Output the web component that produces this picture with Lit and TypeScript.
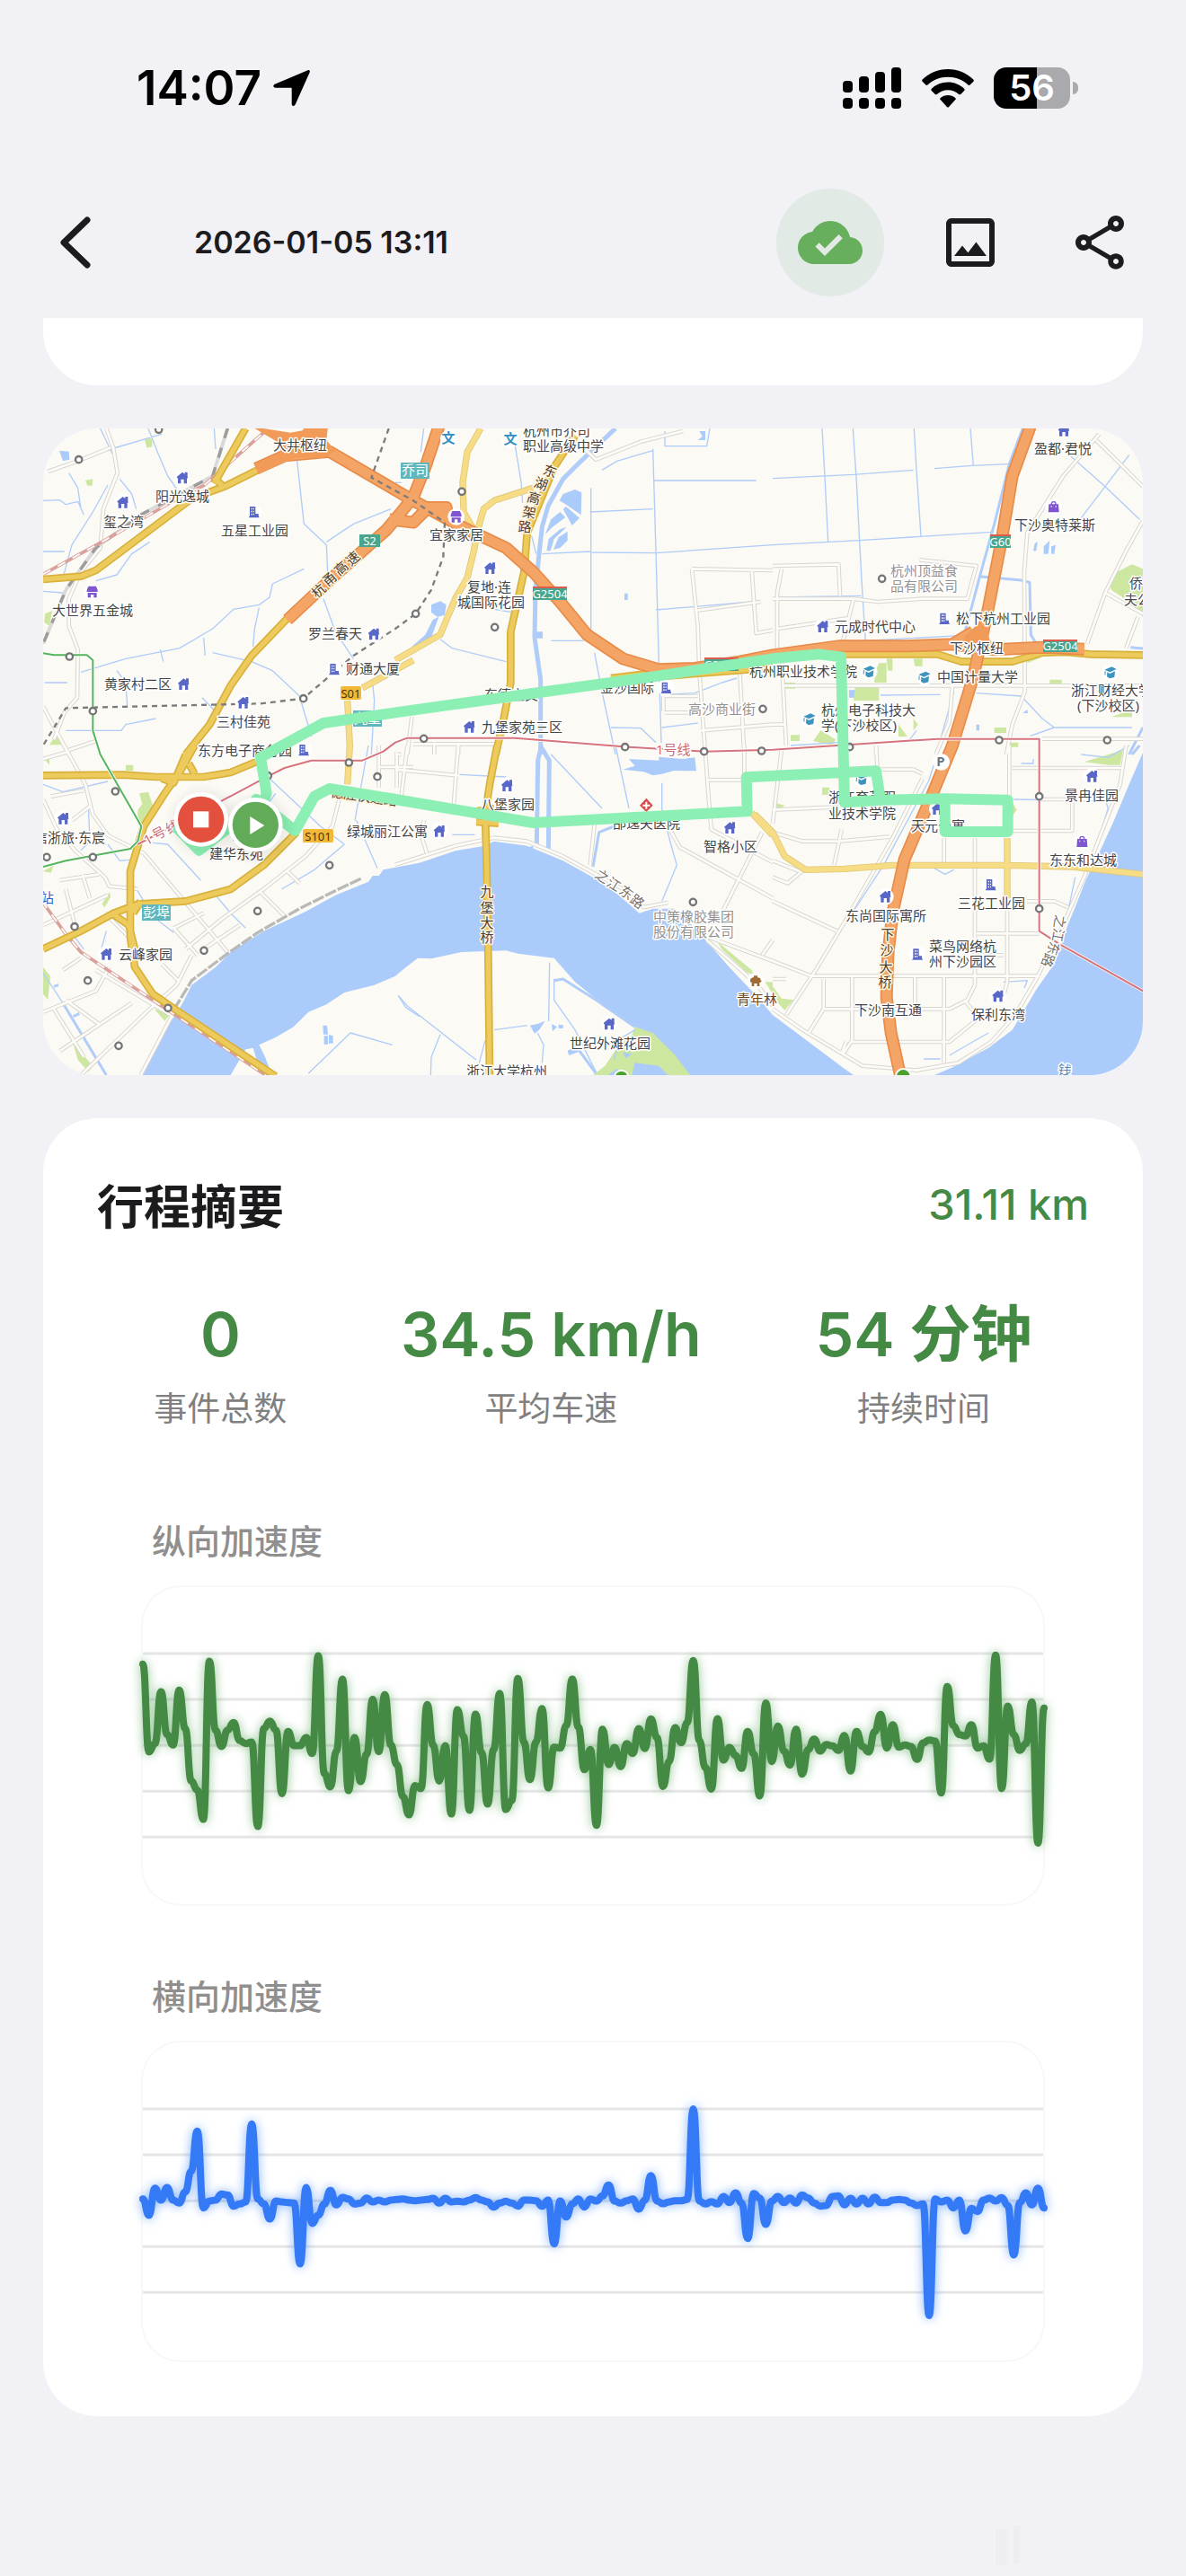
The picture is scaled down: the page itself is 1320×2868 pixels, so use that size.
import { LitElement, html, svg, css } from "lit";
import { customElement, property } from "lit/decorators.js";

/* ---------- Map data ----------
   The map is drawn from six sheets; coordinates inside a sheet are thirds of a map unit. */

type Sheet = "nw" | "n" | "ne" | "sw" | "s" | "se";
type Shape = [Sheet, string];
type Spot = [Sheet, number, number];
type Label = [Sheet, number, number, string, string?];
type Turned = [Sheet, number, number, string, number, string?];
type Badge = [Sheet, number, number, number, number, string, string];

const ORIGIN: Record<Sheet, [number, number]> = {
  nw: [-24, -21],
  n: [1176, -21],
  ne: [2436, -21],
  sw: [-24, 1059],
  s: [1176, 1059],
  se: [2436, 1059],
};

const WATER: Shape[] = [
  ["sw", "M355,1101 L400,1010 455,915 490,860 520,800 600,740 650,690 760,620 900,555 1000,500 1110,455 1125,435 1145,435 1160,415 1280,392 1400,352 1490,337 1530,320 1640,335 1760,385 1860,440 1940,495 2015,560 2060,545 2130,545 2200,610 2250,665 2310,735 2400,830 2460,900 2560,975 2700,1080 2730,1101 2180,1101 2100,1020 2000,940 1900,870 1800,790 1730,710 1610,695 1570,685 1420,690 1320,712 1275,710 1230,745 1200,770 1130,800 1030,825 970,865 910,890 860,940 800,975 745,1000 765,1040 780,1080 740,1060 725,1010 700,1015 650,1101Z"],
  ["se", "M1240,15 L1190,130 1140,250 1085,370 1045,450 1010,540 985,600 940,730 880,815 800,950 720,1010 600,1075 540,1101 1240,1101Z"],
  ["n", "M560,240 L600,225 622,235 620,310 570,275 548,262Z M560,290 L570,282 615,320 590,345Z M500,375 L520,325 550,300 568,318 525,350Z M505,430 L512,390 550,358 572,350 530,390 518,430Z M528,425 L545,385 575,365 575,395 550,420Z"],
  ["s", "M760,80 L800,68 780,45 880,50 880,38 960,45 1000,40 1005,85 930,84 890,95 860,100 830,88Z"],
  ["s", "M450,935 L475,930 500,920 480,950 465,962Z M522,930 L540,940 525,955Z M545,933 L560,933 560,945 545,945Z M575,1020 L610,1000 620,1020 580,1035Z M445,340 L460,335 460,360Z"],
  ["sw", "M958,935 L972,935 975,965 960,965Z M962,970 L975,970 975,998 962,998Z M978,966 L992,970 992,995 978,995Z"],
  ["nw", "M78,95 L110,98 112,125 90,130Z"],
  ["n", "M120,610 L150,598 170,610 165,645 140,650 120,635Z M55,750 L100,710 125,660 145,650 120,720 85,755Z M1015,30 L1035,30 1035,60 1010,60 1025,48Z M470,700 H492 V722 H470Z M765,572 L776,572 776,594 765,594Z"],
  ["ne", "M875,405 L885,400 880,430 870,430Z M905,415 L925,395 920,440 905,440Z M930,415 L945,410 940,440 930,440Z M255,895 H315 V920 H255Z M320,890 H352 V925 H320Z M835,972 L850,960 852,972Z M680,1010 H690 V1030 H680Z"],
];

const GREEN: Shape[] = [
  ["nw", "M362,55 L388,55 388,82 370,86Z M165,195 L190,190 188,212 172,212Z M70,1040 L90,1078 45,1078Z M30,640 L55,630 45,680 28,670Z"],
  ["sw", "M345,160 L375,155 390,200 370,250 340,265 340,215 355,195Z M24,420 L60,400 50,425Z M220,530 L245,490 250,505 230,540Z M24,740 L48,770 40,850 24,830Z M125,1000 L155,1030 190,1070 175,1090 140,1050Z M24,40 L45,40 45,65Z M395,880 L450,895 430,920Z M300,65 H325 V85 H300Z"],
  ["s", "M800,940 L860,960 930,1030 985,1101 660,1101 700,1070 740,1010 790,965Z M1075,655 L1190,750 1200,770 1170,755 1090,680Z M1235,790 L1260,790 1260,830Z"],
  ["se", "M0,805 L30,845 70,850 40,885 0,840Z M1040,55 L1170,15 1160,65 1120,65Z M0,190 L40,200 20,215 0,210Z M165,140 H190 V165 H165Z M800,190 L815,215 800,235Z"],
  ["ne", "M1125,540 L1150,500 1200,475 1236,490 1236,650 1190,600 1130,560Z M275,885 H355 V930 H270Z M355,805 H380 V870 H340 V840Z M380,790 H400 V830 H385Z M470,790 H500 V815 H475Z M60,1045 H90 V1065 H60Z M420,1010 L450,1050 420,1050Z M135,1065 L160,1030 210,1060 200,1080Z M470,990 L485,1010 470,1030Z M925,860 H965 V875 H925Z M740,1020 H780 V1038 H740Z M1130,985 L1200,960 1200,985Z M40,870 H75 V890 H40Z M790,1070 H820 V1085 H790Z M850,790 L900,785 850,805Z"],
];

const CREEK: Shape[] = [
  ["nw", "M215,21 L255,105 M40,160 L250,90 420,40 M375,21 L410,110 440,180 475,230 M24,262 L80,260 100,275 140,265 160,310 M280,190 L320,240 335,290 M240,210 L190,300 120,410 90,520 M24,432 H95 M110,170 L140,220 150,290 M24,565 L90,570 M595,21 L600,90 M870,110 L895,340 970,410 975,520 M960,590 L1000,700 1060,790 M970,400 L1060,340 1185,290 M895,490 L790,540 780,585 745,610 660,625 590,690 480,755 M480,755 L300,790 150,835 M745,620 L730,690 725,750 M560,720 L565,780 M590,770 L720,800 790,830 880,915 920,1050 M415,760 L425,800 M270,830 L300,870 305,950 M30,870 L105,870 M400,990 L300,1010 285,1030 100,1030 M555,920 L650,1020 M1125,880 L1130,930 1120,1110 M380,400 L320,440 270,510 200,530"],
  ["n", "M95,21 L85,100 M400,80 L420,200 425,270 M860,90 L870,430 880,810 888,1070 M690,160 L740,130 860,95 M865,195 H1205 M650,300 L860,290 M653,220 V700 M490,440 L650,432 M650,435 L870,437 1260,410 M870,627 L1190,600 M520,730 H630 M150,725 L190,755 370,800 M665,770 L690,900 735,1110 M455,380 L470,440 M330,625 L390,635 M720,1020 L820,1022 870,1070 M890,1020 L1010,1005 M890,910 L1000,905 1090,870 1140,855 M900,30 V80 H1040 L1050,21 M20,202 H0"],
  ["ne", "M165,21 L175,200 185,400 M268,21 L280,200 290,400 300,580 310,730 M472,21 L480,160 495,380 M0,188 L270,175 470,160 M540,155 L665,145 790,140 M660,21 L670,145 M0,410 L290,395 730,367 M980,100 L1110,215 1225,325 M1190,110 L1110,215 1030,320 M20,585 L295,580 M220,735 L640,712 M60,1080 L220,1070 M360,912 L560,910 M680,905 L830,915 900,990 940,1020 1200,1020 M940,1020 L860,1048 M450,1070 L480,1030 M605,900 L560,1060"],
  ["sw", "M24,130 L90,155 240,120 M175,200 L180,320 150,350 M240,330 L280,385 340,380 M780,110 L950,270 1030,330 M1030,330 L930,415 820,480 M600,500 L650,560 700,610 M390,325 L440,330 550,450 M1110,0 L1065,250 M1070,250 L1140,410 M370,555 L460,625 M330,470 L360,520 M910,1095 L1050,960 1190,1000 M1210,835 L1235,875 1280,905 M24,760 L90,860 M235,620 L215,690 M130,640 L160,680 M745,240 L800,160"],
  ["s", "M10,835 L40,870 270,1050 M150,965 L120,1040 118,1101 M515,725 L512,920 M330,950 L440,935 M475,960 L495,1000 490,1060 M530,780 V850 L600,950 670,1090 M215,97 L370,105 M520,30 L690,210 M735,0 L780,210 M890,125 V210 L920,330 940,400 890,520 M300,985 L280,1060 M190,298 H265 M730,1050 L750,980 800,950"],
  ["se", "M135,770 L160,720 370,400 520,120 560,0 M1110,180 L1120,210 1095,290 M805,180 L1110,185 M540,410 L575,430 605,415 M1010,440 L985,560 M590,1035 L720,960 M505,1047 H560 M770,790 L850,785 840,810 M1030,30 L1120,40 1190,0 M830,60 H870 V45"],
];

const CANAL: Shape[] = [
  ["n", "M735,21 L620,130 560,190 510,280 490,350 480,440 468,560 465,720 485,860 485,1110"],
  ["s", "M488,0 L476,50 472,330 M490,10 L514,50 511,350"],
];

const STREAM: Shape[] = [
  ["ne", "M835,21 L790,140 740,340 690,520 640,710 M690,515 L830,528 858,535 862,710 880,740 M1195,752 L1236,756 M1236,1020 L1190,1110"],
  ["se", "M1225,0 L1200,30"],
  ["s", "M660,405 L680,290 730,270 M530,785 L560,780 670,850 800,940 M600,1000 L670,1095"],
  ["sw", "M90,860 L150,960 235,1101 M60,805 L75,800 M125,905 L145,895 M155,970 L175,960"],
];

const MINOR: Shape[] = [
  ["nw", "M235,21 L258,85 272,170 225,290 215,420 150,500 110,590 110,680 140,760 138,920 95,970 60,1060 M40,165 L140,130 250,85 M24,950 L110,1110 M110,1095 L200,1065"],
  ["n", "M600,60 L670,125 820,65 960,30 M990,490 L1260,495 M990,490 L1010,680 1015,830 M1190,495 L1205,705 1260,695 M1000,630 L1220,600 M900,915 H1010 M900,970 H1010 M895,915 V965 M1150,830 L1165,1110 M1020,1030 L1260,1010 M1015,830 L1035,1110 M40,1110 L55,985 M0,1110 H20 M60,1075 H340 M130,1070 V1110 M210,1070 V1110"],
  ["ne", "M0,480 L220,475 225,580 M15,690 L250,655 M0,590 L270,590 350,600 500,590 650,590 680,480 490,460 M30,490 L15,570 15,760 M270,590 L235,730 M1090,40 L970,180 850,370 840,500 842,900 800,1010 780,1110 M1080,60 L1236,215 M1236,330 L1180,430 1110,570 1050,740 M1110,570 L1236,640 M1220,650 L1180,755 M35,880 H1236 M30,790 L45,1080 M600,880 L590,1000 545,1110 M900,1058 H1236 M0,1010 H40 M345,1080 V1110"],
  ["sw", "M95,0 L165,130 190,230 240,300 360,360 640,690 M24,180 L70,280 130,350 230,440 245,470 340,480 M24,45 L110,20 M50,170 L160,150 M120,250 L185,200 M24,600 L240,500 M80,450 L210,430 M155,430 L180,510 M24,890 L200,820 245,740 M80,1020 L320,860 M100,850 L210,930 M90,750 L150,710 M150,1101 L380,880 470,800 520,700 M200,750 L450,900 M450,910 L350,1101 M100,480 L130,600 M160,1040 L60,880 M1020,150 L990,270 900,370 760,480 620,580 500,680 M840,420 L880,460 M750,490 L830,570 M460,610 L560,560 M460,610 L540,700 M420,730 L480,790 M560,680 L680,600 M1145,0 V140 M1145,72 H1260 M1205,20 V140 M230,560 L320,650"],
  ["s", "M40,0 L20,170 M0,80 L210,100 M210,0 L195,195 M95,250 L90,310 105,360 M0,398 L200,335 330,308 440,320 560,370 760,480 830,540 910,525 M1035,20 L1045,160 1055,280 1260,390 M1045,115 H1170 M1165,0 V100 M900,250 L950,340 1260,510 M1225,290 L1150,440 1090,560 M665,265 L650,400 M1045,640 L1260,720 M1260,650 L1225,700 M1040,650 L1120,720 1210,800 1260,870"],
  ["se", "M30,10 L0,260 M0,215 L220,205 M0,290 L100,320 220,320 390,305 M345,0 L350,80 470,80 500,95 M230,280 L205,400 M110,410 L50,460 0,440 M500,110 L400,310 240,590 150,740 45,900 M0,520 L215,620 M0,385 L90,420 M0,720 L130,770 890,770 M45,780 H0 M170,780 V880 L120,960 M265,775 V985 L235,1030 M475,775 V870 M572,775 V1060 M170,880 H590 L650,850 675,800 675,310 M572,310 V395 M265,990 H590 L700,900 M640,850 L680,900 M783,510 V790 L770,840 M850,520 L940,520 985,540 M800,285 H1000 V180 M680,628 H890 M680,700 H770 M790,0 V180 M800,75 H1170 M890,180 H1110 M0,880 L100,950 300,1070 480,1085 620,1060 730,990 810,900 880,780 960,620 1040,440 1160,130 1180,0 M245,990 L230,1030"],
];

const LIGHT_YELLOW: Shape[] = [
  ["nw", "M1090,888 L1260,795 M1040,930 L1048,1080 1040,1210"],
  ["n", "M0,795 L150,710 200,590 240,520 262,430 275,360 295,290 330,262 460,220 M285,21 L240,100 225,200 228,300 265,365"],
  ["s", "M1190,225 L1260,300"],
  ["se", "M-60,230 L0,290 40,370 110,415 240,412 400,400 780,400 1000,405 1236,430 M783,310 V510"],
];

const YELLOW: Shape[] = [
  ["nw", "M840,655 L720,780 650,880 580,1010 500,1110 M24,525 L150,515 200,495 400,345 520,255 630,215 740,160 M595,205 L700,21 M595,185 L625,215"],
  ["sw", "M530,0 L480,90 430,160 360,270 315,420 315,640 330,740 390,830 470,885 800,1105 M24,100 L290,98 400,105 560,105 650,90 735,55 M24,680 L150,620 260,560 340,530 500,520 650,480 760,400 870,290 M420,110 L460,125 500,30 M510,60 L530,95 M260,565 L310,600 330,680 M350,520 L325,560"],
  ["n", "M600,45 L530,150 440,370 430,500 385,700 385,870 360,1000 335,1110 M720,855 L860,838 M900,848 L1260,820"],
  ["s", "M340,0 L315,130 300,230 305,400 310,700 315,1105 M270,220 L330,210 M270,255 L345,260"],
  ["ne", "M240,775 L550,775 630,800 800,800 900,770 980,768 1060,775 1236,778"],
];

const ORANGE: Shape[] = [
  ["ne", "M860,15 L800,180 765,390 720,620 670,850 600,1080 530,1250 440,1460 400,1640 385,1780 380,1920 395,2040 428,2190"],
  ["n", "M285,380 L370,420 460,500 550,600 640,710 760,790 880,826 1000,822 1150,800 1260,778 1480,748 1710,748 1860,742 2000,760 2160,752 2300,758 M1860,742 L1930,700"],
  ["nw", "M1345,15 L1300,150 1260,250 1220,300 1170,360 1000,510 840,660 M735,155 L830,112 980,98 1120,180 1260,262 1400,338 1485,380 M1180,325 L1260,335 1310,285 1370,285 1375,310"],
];

const LABELS: Label[] = [
  ["nw", 793, 76, "大井枢纽"],
  ["nw", 400, 246, "阳光逸城"],
  ["nw", 226, 330, "玺之湾"],
  ["nw", 617, 360, "五星工业园"],
  ["nw", 55, 627, "大世界五金城"],
  ["nw", 908, 705, "罗兰春天"],
  ["nw", 1035, 823, "财通大厦"],
  ["nw", 229, 874, "黄家村二区"],
  ["nw", 604, 998, "三村佳苑"],
  ["nw", 540, 1094, "东方电子商务园"],
  ["n", 425, 28, "杭州市乔司"],
  ["n", 425, 78, "职业高级中学"],
  ["n", 113, 376, "宜家家居"],
  ["n", 241, 549, "复地·连"],
  ["n", 206, 601, "城国际花园"],
  ["n", 297, 910, "东德立交"],
  ["n", 288, 1018, "九堡家苑三区"],
  ["n", 685, 885, "金沙国际"],
  ["n", 978, 957, "高沙商业街", "soft"],
  ["n", 870, 1092, "1号线", "line"],
  ["ne", 873, 87, "盈都·君悦"],
  ["ne", 806, 342, "下沙奥特莱斯"],
  ["ne", 393, 495, "杭州顶益食", "soft"],
  ["ne", 393, 546, "品有限公司", "soft"],
  ["ne", 208, 682, "元成时代中心"],
  ["ne", 612, 655, "松下杭州工业园"],
  ["ne", 590, 753, "下沙枢纽"],
  ["ne", -77, 830, "杭州职业技术学院"],
  ["ne", 548, 850, "中国计量大学"],
  ["ne", 995, 893, "浙江财经大学"],
  ["ne", 1018, 945, "(下沙校区)"],
  ["ne", 163, 960, "杭州电子科技大"],
  ["ne", 163, 1012, "学(下沙校区)"],
  ["ne", 1192, 537, "侨"],
  ["ne", 1172, 590, "夫公园"],
  ["sw", -6, 305, "信浙旅·东宸"],
  ["sw", 578, 360, "建华东苑"],
  ["sw", 1038, 284, "绿城丽江公寓"],
  ["sw", 276, 697, "云峰家园"],
  ["sw", 16, 508, "站", "blue"],
  ["s", 286, 196, "八堡家园"],
  ["s", 727, 258, "邵逸夫医院"],
  ["s", 1028, 335, "智格小区"],
  ["s", 861, 569, "中策橡胶集团", "soft"],
  ["s", 861, 620, "股份有限公司", "soft"],
  ["s", 1139, 846, "青年林", "brown"],
  ["s", 581, 993, "世纪外滩花园"],
  ["s", 236, 1087, "浙江大学杭州"],
  ["se", 187, 170, "浙江育英职"],
  ["se", 187, 224, "业技术学院"],
  ["se", 462, 267, "天元公寓"],
  ["se", 976, 165, "景冉佳园"],
  ["se", 925, 381, "东东和达城"],
  ["se", 617, 525, "三花工业园"],
  ["se", 242, 566, "东尚国际寓所"],
  ["se", 523, 669, "菜鸟网络杭"],
  ["se", 523, 720, "州下沙园区"],
  ["se", 274, 882, "下沙南互通"],
  ["se", 664, 898, "保利东湾"],
];

const TURNED: Turned[] = [
  ["nw", 944, 563, "杭", -42, "road"],
  ["nw", 981, 524, "甬", -42, "road"],
  ["nw", 1020, 489, "高", -42, "road"],
  ["nw", 1058, 456, "速", -42, "road"],
  ["n", 515, 165, "东", 20, "road"],
  ["n", 487, 208, "湖", 20, "road"],
  ["n", 462, 255, "高", 16, "road"],
  ["n", 447, 302, "架", 10, "road"],
  ["n", 433, 352, "路", 4, "road"],
  ["sw", 1095, 170, "德胜快速路", 8, "road"],
  ["s", 690, 438, "之", 32, "grey"],
  ["s", 730, 465, "江", 32, "grey"],
  ["s", 770, 492, "东", 36, "grey"],
  ["s", 808, 521, "路", 36, "grey"],
  ["s", 305, 490, "九", 0, "road"],
  ["s", 306, 542, "堡", 0, "road"],
  ["s", 306, 593, "大", 0, "road"],
  ["s", 307, 643, "桥", 0, "road"],
  ["se", 383, 633, "下", 0, "road"],
  ["se", 381, 685, "沙", 0, "road"],
  ["se", 378, 740, "大", 0, "road"],
  ["se", 376, 792, "桥", 0, "road"],
  ["se", 958, 587, "之", 98, "grey"],
  ["se", 950, 632, "江", 100, "grey"],
  ["se", 936, 678, "东", 106, "grey"],
  ["se", 918, 718, "路", 110, "grey"],
  ["se", 975, 1085, "钱", 10, "water"],
  ["sw", 375, 315, "1", -28, "line"],
  ["sw", 412, 294, "号", -28, "line"],
  ["sw", 455, 272, "线", -28, "line"],
];

const BADGES: Badge[] = [
  ["nw", 1079, 374, 69, 43, "S2", "express"],
  ["nw", 1018, 882, 68, 44, "S01", "state"],
  ["n", 17, 135, 96, 53, "乔司", "town"],
  ["n", 459, 550, 113, 46, "G2504", "national"],
  ["n", 1032, 785, 114, 46, "G2504", "national"],
  ["ne", 726, 375, 69, 44, "G60", "national"],
  ["ne", 904, 727, 114, 43, "G2504", "national"],
  ["sw", 891, 279, 101, 44, "S101", "state"],
  ["sw", 355, 530, 96, 54, "彭埠", "town"],
  ["nw", 1059, 963, 95, 53, "九堡", "town"],
];

const HOUSES: Spot[] = [
  ["nw", 489, 186], ["nw", 290, 268], ["nw", 1128, 708], ["nw", 493, 875], ["nw", 692, 937],
  ["n", 316, 488], ["n", 247, 1018], ["ne", 972, 28], ["ne", 167, 683], ["sw", 91, 244],
  ["sw", 235, 697], ["s", 373, 134], ["s", 147, 286], ["s", 1117, 275], ["s", 714, 930],
  ["se", 1066, 103], ["se", 376, 505], ["se", 752, 837], ["se", 550, 212], ["sw", 672, 300],
];
const TOWERS: Spot[] = [
  ["nw", 727, 300], ["nw", 995, 825], ["nw", 893, 1095], ["n", 903, 887], ["ne", 572, 656],
  ["se", 727, 465], ["se", 482, 697],
];
const SHOPS: Spot[] = [["nw", 188, 567], ["n", 203, 316]];
const BAGS: Spot[] = [["ne", 938, 283], ["se", 1033, 321]];
const CAPS: Spot[] = [["ne", 322, 833], ["ne", 507, 852], ["ne", 1128, 836], ["ne", 123, 992], ["se", 298, 112]];
const STATIONS: Spot[] = [
  ["nw", 143, 125], ["nw", 410, 25], ["nw", 112, 783], ["nw", 190, 965], ["nw", 893, 923],
  ["n", 222, 232], ["n", 68, 640], ["n", 332, 685], ["n", 95, 1057], ["n", 767, 1085],
  ["n", 1031, 1100], ["n", 1223, 1098], ["n", 1227, 958], ["ne", 365, 523], ["ne", 756, 1062],
  ["ne", 1117, 1062], ["ne", 257, 1085], ["sw", 265, 153], ["sw", 190, 373], ["sw", 36, 373],
  ["sw", 129, 605], ["sw", 173, 785], ["sw", 276, 1003], ["sw", 441, 877], ["sw", 561, 685],
  ["sw", 740, 553], ["sw", 980, 400], ["sw", 1140, 104], ["sw", 1045, 57], ["sw", 775, 101],
  ["s", 994, 523], ["se", 890, 170], ["se", 890, 545],
];

const ROUTE =
  "M475,280 L545,350 660,262 735,262 770,160 750,40 960,-75 1200,-110 2060,-230 2460,-290 2615,-305 2688,-296 " +
  "2700,190 2825,182 3035,178 3245,182 3245,288 3035,288 3035,178 2820,182 2805,85 2372,106 2375,220 1660,258 1200,180 " +
  "980,144 930,170 865,285 735,180";

const toMap = (s: Sheet, x: number, y: number) => [
  Math.round((x + ORIGIN[s][0]) / 3),
  Math.round((y + ORIGIN[s][1]) / 3),
];
const at = (s: Sheet, x = 0, y = 0) => `translate(${x + ORIGIN[s][0]} ${y + ORIGIN[s][1]})`;
const layer = (shapes: Shape[], ...classes: string[]) =>
  classes.map((c) => shapes.map(([s, d]) => svg`<path class=${c} transform=${at(s)} d=${d} />`));

@customElement("trip-map")
export class TripMap extends LitElement {
  static styles = css`
    :host { display: block; border-radius: 60px; overflow: hidden; }
    svg { display: block; width: 100%; height: auto; }
    path { stroke-linejoin: round; }
    .land { fill: #fbfaf5; }
    .water { fill: #abcbfb; }
    .park { fill: #cde7a1; }
    .creek, .stream, .canal { fill: none; stroke: #b0ccf9; }
    .creek { stroke-width: 4; }
    .stream { stroke-width: 9; }
    .canal { stroke-width: 15; }
    .minor-edge { fill: none; stroke: #d9d6d0; stroke-width: 14; }
    .minor { fill: none; stroke: #fdfcf9; stroke-width: 8; }
    .pale-edge { fill: none; stroke: #e0c878; stroke-width: 22; }
    .pale { fill: none; stroke: #f7dc86; stroke-width: 17; }
    .gold-edge { fill: none; stroke: #d9b03a; stroke-width: 26; }
    .gold { fill: none; stroke: #eccb5c; stroke-width: 16; }
    .motor-edge { fill: none; stroke: #e88b48; stroke-width: 42; }
    .motor { fill: none; stroke: #f4a464; stroke-width: 32; }
    .motor-node { fill: #f29a58; }
    .rail-base { fill: none; stroke: #dadada; stroke-width: 12; }
    .rail-grey { fill: none; stroke: #9c9c9c; stroke-width: 10; stroke-dasharray: 34 34; }
    .rail-pink { fill: none; stroke: #d9a09c; stroke-width: 11; }
    .rail-gap { fill: none; stroke: #fdf8f6; stroke-width: 6; stroke-dasharray: 28 28; }
    .works { fill: none; stroke: #7c7c7c; stroke-width: 7; stroke-dasharray: 18 15; }
    .quay { fill: none; stroke: #b9b9b9; stroke-width: 10; stroke-dasharray: 40 6; }
    .metro-edge { fill: none; stroke: #ffffff; stroke-width: 11; }
    .metro-green { fill: none; stroke: #55b45c; stroke-width: 6; }
    .metro-red { fill: none; stroke: #d6737c; stroke-width: 6; }
    .route { fill: none; stroke: #8cefb3; stroke-width: 36; stroke-linejoin: round; stroke-linecap: round; }
    .halo { fill: #ffffff; }
    .home { fill: #5968c6; }
    .mall { fill: #8055d0; }
    .campus { fill: #3d95bd; }
    .hospital { fill: #d84b4b; }
    .pavilion { fill: #a06a34; }
    .tree { fill: #4ca02c; }
    .station { fill: #ffffff; stroke: #757575; stroke-width: 7; }
    .shade { fill: #000000; opacity: 0.05; filter: blur(14px); }
    .stop { fill: #e3503e; }
    .start { fill: #62ab58; }
    text {
      font-family: "Noto Sans", "Noto Sans CJK SC", sans-serif;
      font-size: 15px;
      fill: #454545;
      paint-order: stroke;
      stroke: #ffffff;
      stroke-width: 3px;
      stroke-linejoin: round;
    }
    .soft { fill: #929292; }
    .grey { fill: #777069; }
    .road { fill: #4f4030; stroke: #fff3dc; }
    .brown { fill: #6d451f; }
    .blue { fill: #2a62c4; }
    .line { fill: #cf6b72; }
    .water-name { fill: #5d86bb; }
    .centered { text-anchor: middle; }
    .badge-text { text-anchor: middle; stroke: none; fill: #ffffff; }
    .badge-text.express, .badge-text.national, .badge-text.state { font-size: 13px; }
    .badge-text.state { fill: #4a3412; }
    .school-text { text-anchor: middle; stroke: none; fill: #2f8fc0; font-weight: 700; }
    .parking-text { text-anchor: middle; stroke: none; fill: #6f7780; font-weight: 700; }
    rect.express, rect.national { fill: #48a68c; }
    rect.town { fill: #60b6bd; }
    rect.state { fill: #f1b936; }
    .badge-top { fill: #dd5a4c; }
  `;

  private glyph(spots: Spot[], shape: unknown) {
    return spots.map(([s, x, y]) => svg`<g transform=${at(s, x, y)}><circle class="halo" r="28" />${shape}</g>`);
  }

  render() {
    return html`
      <svg viewBox="0 0 1224 720" role="img" aria-label="行程路线">
        <g transform="scale(0.333333)">
          <rect class="land" width="3672" height="2160" />
          ${layer(WATER, "water")} ${layer(GREEN, "park")} ${layer(CREEK, "creek")}
          ${layer(STREAM, "stream")} ${layer(CANAL, "canal")}
          <path class="water" transform=${at("s")} d="M710,1101 L740,1080 760,1101Z M800,1060 L880,1070 910,1101 790,1101Z M760,1025 L790,1030 770,1045Z" />
          ${layer(MINOR, "minor-edge", "minor")}
          <path class="quay" transform=${at("sw")} d="M1085,445 L1000,485 880,545 740,625 640,695 520,785 465,875" />
          <path class="rail-base" transform=${at("nw")} d="M640,21 L590,180 350,310 200,420 100,560 24,740" />
          <path class="rail-grey" transform=${at("nw")} d="M640,21 L590,180 350,310 200,420 100,560 24,740" />
          ${layer([["nw", "M24,508 L220,400 500,240 560,212 760,35"], ["sw", "M20,520 L100,630 150,690 450,890 780,1110"]], "rail-pink", "rail-gap")}
          ${layer(LIGHT_YELLOW, "pale-edge", "pale")}
          ${layer(YELLOW, "gold-edge", "gold")}
          ${layer(ORANGE, "motor-edge", "motor")}
          <path class="motor-node" transform=${at("nw")} d="M720,15 L850,35 890,28 900,15 975,15 970,60 1000,95 960,120 870,118 745,172 730,142 820,98 800,62Z" />
          <path class="motor-node" transform=${at("ne")} d="M640,715 L690,670 715,690 725,730 780,760 640,765Z" />
          <path class="works" transform=${at("nw")} d="M1178,21 L1120,185 1260,262 1365,335 1360,450 1320,560 1268,640 1200,690 1060,780 893,923 750,940 100,955 24,1080" />
          ${layer([["nw", "M24,772 L60,778 170,778 190,795 190,1030 215,1110 285,1233 352,1350 340,1400 315,1425 100,1465 24,1485"]], "metro-edge", "metro-green")}
          ${layer([["sw", "M340,330 L620,185 780,100 830,75 920,50 1090,50 1160,20 1200,-10 1240,-25 1600,-25 1980,5 2231,20 2460,14 3010,-22 3350,-22 3350,620 3420,665 3700,822"]], "metro-edge", "metro-red")}
          ${STATIONS.map(([s, x, y]) => svg`<circle class="station" transform=${at(s, x, y)} r="11" />`)}
          ${this.glyph(HOUSES, svg`<path class="home" d="M-19,-3 L0,-19 8,-13 8,-19 17,-19 17,-3 19,0 15,2 15,19 5,19 5,5 -5,5 -5,19 -15,19 -15,2Z" />`)}
          ${this.glyph(TOWERS, svg`<path class="home" fill-rule="evenodd" d="M-13,-18 L6,-18 6,6 16,6 16,12 19,19 -17,19 -13,13Z M-8,-13 V-8 H-4 V-13Z M-1,-13 V-8 H2 V-13Z M-8,-4 V1 H-4 V-4Z M-1,-4 V1 H2 V-4Z M-8,5 V10 H-4 V5Z M-1,5 V10 H2 V5Z" />`)}
          ${this.glyph(SHOPS, svg`<path class="mall" fill-rule="evenodd" d="M-13,-19 H13 L18,-6 V0 H-18 V-6Z M-15,3 H15 V19 H5 V9 H-5 V19 H-15Z" />`)}
          ${this.glyph(BAGS, svg`<path class="mall" fill-rule="evenodd" d="M-16,-9 H-9 A9,10 0 0 1 9,-9 H16 L18,18 H-18Z M-5,-9 H5 A5,6 0 0 0 -5,-9Z M-9,-4 V1 H-6 V-4Z M6,-4 V1 H9 V-4Z" />`)}
          ${this.glyph(CAPS, svg`<path class="campus" d="M-20,-9 L4,-19 20,-11 -2,-1Z M-11,-1 L-2,4 15,-4 13,16 -3,20 -12,14Z M-19,-5 L-16,-4 -17,9 -20,8Z" />`)}
          ${this.glyph([["s", 1203, 786]], svg`<path class="pavilion" d="M-16,-8 L-6,-12 -6,-17 6,-17 6,-12 16,-8 16,-3 20,0 17,5 13,5 13,18 5,18 5,9 -5,9 -5,18 -13,18 -13,5 -18,4 -18,-1Z" />`)}
          <g transform=${at("s", 838, 200)}><path class="hospital" d="M0,-24 L22,0 0,22 -22,0Z" /><path class="halo" d="M-3,-12 H3 V-3 H12 V3 H3 V12 H-3 V3 H-12 V-3 H-3Z" /></g>
          ${this.glyph([["n", 178, 55], ["n", 383, 58], ["se", 563, 55]], "")}
          <g transform=${at("s", 755, 1108)}><circle class="halo" r="26" /><circle class="tree" r="20" /></g>
          <g transform=${at("se", 436, 1105)}><circle class="halo" r="28" /><circle class="tree" r="22" /></g>
        </g>

        ${BADGES.map(([s, x, y, w, h, name, kind]) => {
          const [bx, by] = toMap(s, x, y);
          const bw = Math.round(w / 3);
          const bh = Math.round(h / 3);
          return svg`
            <rect class=${kind} x=${bx} y=${by} width=${bw} height=${bh} rx=${kind === "state" ? 2 : 0} />
            ${kind === "national" ? svg`<rect class="badge-top" x=${bx} y=${by} width=${bw} height="2" />` : ""}
            <text class="badge-text ${kind}" x=${bx + bw / 2} y=${by + Math.round(bh / 2) + 5}>${name}</text>`;
        })}
        ${LABELS.map(([s, x, y, name, kind]) => {
          const [lx, ly] = toMap(s, x, y);
          return svg`<text class=${kind ?? ""} x=${lx} y=${ly + 6}>${name}</text>`;
        })}
        ${TURNED.map(([s, x, y, name, turn, kind]) => {
          const [lx, ly] = toMap(s, x, y);
          return svg`<text class="centered ${kind === "water" ? "water-name" : kind ?? ""}" transform="translate(${lx} ${ly}) rotate(${turn})" y="5">${name}</text>`;
        })}
        ${([["n", 178, 55], ["n", 383, 58]] as Spot[]).map(([s, x, y]) => {
          const [lx, ly] = toMap(s, x, y);
          return svg`<text class="school-text" x=${lx} y=${ly + 5}>文</text>`;
        })}
        <text class="parking-text" x=${toMap("se", 560, 55)[0]} y=${toMap("se", 560, 55)[1] + 5}>P</text>

        <g transform="scale(0.333333)">
          <path class="route" transform=${at("sw")} d=${ROUTE} />
          <circle class="shade" transform=${at("sw", 560, 255)} r="110" />
          <circle class="shade" transform=${at("sw", 740, 275)} r="110" />
          <g transform=${at("sw", 551, 247)}>
            <circle class="halo" r="91" /><circle class="stop" r="77" /><path class="halo" d="M-26,-27 H26 V27 H-26Z" />
          </g>
          <g transform=${at("sw", 733, 265)}>
            <circle class="halo" r="91" /><circle class="start" r="77" /><path class="halo" d="M-18,-28 L30,2 -18,32Z" />
          </g>
        </g>
      </svg>
    `;
  }
}

/* ---------- Charts ---------- */

const FORWARD = [
  -271, 22, -6, -179, -36, -1, -184, -56, 119, 149, 247, -281, -51, 4, -51, -76, -16, -6, -11, 271, -56, -81, -51, 161,
  -46, 1, 1, -26, 27, -299, 94, 139, 19, -221, 151, -26, 121, 29, -153, 21, -169, -1, 64, 171, 232, 134, 144, -136, -1,
  119, 1, 229, -119, -31, 217, -104, 24, 196, 14, -173, 214, 184, -223, -11, 114, -11, -123, 142, 6, 9, -66, -221, -61,
  81, 14, 267, -54, 64, 7, 71, -6, 27, -56, 11, -88, -26, 137, 54, -59, -9, -76, -283, -16, 74, 146, -89, 49, 7, 34, 77,
  -46, 29, 169, -141, 54, -64, 19, 66, -54, 96, 14, -21, 19, -3, 2, 17, -33, 86, -46, 4, 22, -46, -103, 9, -69, 6, -1, 4,
  47, -8, -18, -14, 159, -196, -66, -36, -31, -69, 9, 2, 46, -301, 144, -131, -36, 17, -6, -144, 326, -124,
];

const LATERAL = [
  -6, 49, -42, -2, -44, -2, 8, -29, -99, -232, 24, 1, -2, -22, -19, 18, 11, 4, -256, -6, 11, 61, 1, 4, 6, 8, 211, -44, 76,
  48, 11, -34, 14, -11, -6, 11, 8, -9, 4, -2, 4, -2, -4, -6, -2, 0, -2, -4, -8, 8, -8, 4, 2, 4, -2, -10, -2, 4, 21, 8, 2,
  8, 18, -2, -2, 0, 18, -2, 144, 1, 54, 11, -6, 21, -6, 1, -16, -52, 1, 8, 0, -6, 28, -2, -84, 1, 10, 4, 0, 0, -4, -306,
  1, 11, 3, 11, -14, 6, -26, 8, 126, -24, -9, 79, 1, -14, 6, -9, 8, -19, -9, 8, 18, 16, -14, -16, 14, -8, 11, -8, 11, -12,
  6, 6, -2, -4, -2, 8, 16, 11, 383, -6, 4, -2, 24, -2, 101, 26, 36, -2, -9, 1, -10, 16, 181, 6, -26, 14, -42, 24,
];

@customElement("acceleration-chart")
export class AccelerationChart extends LitElement {
  @property() name = "";
  @property() tone = "green";
  @property({ attribute: false }) samples: number[] = [];

  static styles = css`
    :host { display: flex; flex-direction: column; gap: 24px; }
    h3 {
      margin: 0;
      padding-left: 12px;
      font: 500 38px/54px "Noto Sans CJK SC", sans-serif;
      color: #8f8f8f;
    }
    .frame { border-radius: 44px; box-shadow: inset 0 0 0 2px #f8f8f8; }
    svg { display: block; width: 100%; height: auto; overflow: visible; }
    .grid { stroke: #e6e6e6; stroke-width: 3; }
    .curve { fill: none; stroke-width: 8; stroke-linejoin: round; stroke-linecap: round; }
    .green { stroke: #448944; filter: drop-shadow(0 0 6px rgba(76, 160, 80, 0.6)); }
    .blue { stroke: #3479f6; filter: drop-shadow(0 0 6px rgba(52, 130, 246, 0.6)); }
  `;

  private curve(): string {
    const step = 1002 / (this.samples.length - 1);
    const point = (i: number) => [2 + i * step, 178 + this.samples[i] / 3];
    let [px, py] = point(0);
    let d = `M${px},${py}`;
    for (let i = 1; i < this.samples.length; i++) {
      const [x, y] = point(i);
      const mid = (px + x) / 2;
      d += `C${mid},${py} ${mid},${y} ${x},${y}`;
      [px, py] = [x, y];
    }
    return d;
  }

  render() {
    return html`
      <h3>${this.name}</h3>
      <div class="frame">
        <svg viewBox="0 0 1005 357" role="img" aria-label=${this.name}>
          ${[76, 127, 178, 229, 280].map((y) => svg`<line class="grid" x1="2" x2="1003" y1=${y} y2=${y} />`)}
          <path class="curve ${this.tone}" d=${this.curve()} />
        </svg>
      </div>
    `;
  }
}

/* ---------- Page ---------- */

@customElement("app-root")
export class AppRoot extends LitElement {
  static styles = css`
    :host {
      display: flex;
      flex-direction: column;
      box-sizing: border-box;
      min-height: 100vh;
      background: #f1f1f6;
      color: #1c1c1e;
      font-family: Inter, "Noto Sans CJK SC", sans-serif;
    }
    svg { display: block; }
    .status {
      display: flex;
      align-items: center;
      justify-content: space-between;
      height: 72px;
      padding: 62px 120px 52px 152px;
      color: #000000;
    }
    .clock { display: flex; align-items: center; gap: 12px; font-size: 53px; font-weight: 600; line-height: 72px; }
    .signals { display: flex; align-items: center; gap: 22px; }
    .battery { display: flex; align-items: center; gap: 3px; }
    .cell {
      width: 85px;
      border-radius: 14px;
      background: linear-gradient(90deg, #000000 56%, #a9a9ae 56%);
      color: #ffffff;
      font-size: 40px;
      font-weight: 600;
      line-height: 46px;
      text-align: center;
    }
    .nub { width: 6px; height: 14px; border-radius: 0 6px 6px 0; background: #a9a9ae; }
    .bar { display: flex; align-items: center; height: 168px; padding: 0 24px 0 12px; }
    .bar h1 { flex: 1; margin: 0 0 0 60px; font-size: 34px; font-weight: 600; line-height: 48px; }
    button { display: grid; place-items: center; width: 144px; height: 144px; padding: 0; border: 0; background: none; color: inherit; }
    .saved { width: 120px; height: 120px; margin-right: 24px; border-radius: 60px; background: #e2eae6; color: #67af5c; }
    main { display: flex; flex-direction: column; gap: 48px; padding: 0 48px; }
    .peek { height: 75px; border-radius: 0 0 60px 60px; background: #ffffff; }
    .card { padding: 60px; border-radius: 60px; background: #ffffff; }
    .title { display: flex; align-items: center; justify-content: space-between; }
    h2 { margin: 0; font: 700 52px/72px "Noto Sans CJK SC", sans-serif; }
    .distance { font-size: 47px; font-weight: 500; line-height: 72px; color: #448944; }
    .stats { display: flex; justify-content: space-around; margin: 66px 0 0; }
    .stat { display: flex; flex-direction: column-reverse; align-items: center; gap: 18px; }
    dt { font-size: 37px; line-height: 48px; color: #808080; }
    dd { margin: 0; font-size: 68px; font-weight: 600; line-height: 84px; color: #448944; }
    .charts { display: flex; flex-direction: column; gap: 72px; padding: 94px 49px 0; }
    footer { display: flex; justify-content: flex-end; padding: 122px 184px 0 0; }
  `;

  render() {
    return html`
      <div class="status">
        <div class="clock">
          <span>14:07</span>
          <svg width="42" height="42" viewBox="0 0 42 42" aria-hidden="true">
            <path fill="currentColor" d="M39.5 1.2c1.6-.7 2.9.6 2.2 2.2L25.6 39.6c-1 2.2-3.9 1.7-3.9-.8V21.6c0-.6-.3-.9-.9-.9H3.6c-2.6 0-3.100-3-.8-4z" />
          </svg>
        </div>
        <div class="signals">
          <svg width="66" height="46" viewBox="0 0 66 46" aria-hidden="true">
            ${[15, 10, 5, 0].map(
              (top, i) => svg`
                <rect x=${i * 18} y=${top} width="11" height=${28 - top} rx="4" />
                <rect x=${i * 18} y="34" width="11" height="12" rx="4" />`,
            )}
          </svg>
          <svg width="58" height="43" viewBox="0 0 58 43" aria-hidden="true">
            <path d="M29 0c11 0 21 4.400 28.300 11.500.7.700.7 1.500.1 2.200l-3.800 3.900c-.6.600-1.500.600-2.100 0C45.600 12 37.700 8.800 29 8.800S12.400 12 6.500 17.600c-.6.600-1.500.600-2.100 0L.6 13.700c-.6-.7-.6-1.500.1-2.200C8 4.400 18 0 29 0z" />
            <path d="M29 14.500c7 0 13.400 2.700 18.100 7.200.7.700.7 1.500.1 2.200l-4 4c-.6.600-1.400.600-2 .1A18 18 0 0 0 29 23.200a18 18 0 0 0-12.200 4.800c-.6.500-1.400.500-2-.1l-4-4c-.6-.7-.6-1.500.1-2.200A26 26 0 0 1 29 14.500z" />
            <path d="M29 29c3.200 0 6 1.100 8.200 2.900.8.600.8 1.500.1 2.200l-7.200 7.900c-.7.700-1.500.700-2.200 0l-7.200-7.900c-.7-.7-.7-1.600.1-2.200C23 30.100 25.800 29 29 29z" />
          </svg>
          <div class="battery"><span class="cell">56</span><span class="nub"></span></div>
        </div>
      </div>

      <header class="bar">
        <button type="button" aria-label="返回">
          <svg width="72" height="72" viewBox="0 0 72 72" fill="none" stroke="currentColor" stroke-width="7" stroke-linecap="round" stroke-linejoin="round">
            <path d="M49 11 23 36l26 25" />
          </svg>
        </button>
        <h1>2026-01-05 13:11</h1>
        <button type="button" class="saved" aria-label="已同步">
          <svg width="72" height="72" viewBox="0 0 24 24" fill="currentColor">
            <path d="M19.350 10.040C18.670 6.590 15.640 4 12 4 9.110 4 6.600 5.640 5.350 8.040 2.340 8.360 0 10.910 0 14c0 3.310 2.690 6 6 6h13c2.760 0 5-2.240 5-5 0-2.640-2.050-4.780-4.650-4.960zM10 17l-3.500-3.500 1.410-1.410L10 14.170 15.180 9l1.410 1.410L10 17z" />
          </svg>
        </button>
        <button type="button" aria-label="图片">
          <svg width="72" height="72" viewBox="0 0 24 24" fill="currentColor">
            <path d="M19 5v14H5V5h14m0-2H5c-1.100 0-2 .9-2 2v14c0 1.100.9 2 2 2h14c1.100 0 2-.9 2-2V5c0-1.100-.9-2-2-2zm-4.860 8.860l-3 3.870L9 13.140 6 17h12l-3.860-5.140z" />
          </svg>
        </button>
        <button type="button" aria-label="分享">
          <svg width="72" height="72" viewBox="0 0 24 24" fill="currentColor">
            <path d="M18 16.080c-.76 0-1.440.3-1.960.77L8.910 12.700c.05-.23.09-.46.09-.7s-.04-.47-.09-.7l7.050-4.110c.54.5 1.250.81 2.040.81 1.660 0 3-1.340 3-3s-1.340-3-3-3-3 1.340-3 3c0 .24.04.47.09.7L8.040 9.810C7.500 9.310 6.790 9 6 9c-1.660 0-3 1.340-3 3s1.340 3 3 3c.79 0 1.500-.31 2.040-.81l7.120 4.160c-.05.21-.08.43-.08.65 0 1.610 1.310 2.920 2.920 2.920s2.920-1.310 2.920-2.920-1.310-2.920-2.920-2.920zM18 4c.55 0 1 .45 1 1s-.45 1-1 1-1-.45-1-1 .45-1 1-1zM6 13c-.55 0-1-.45-1-1s.45-1 1-1 1 .45 1 1-.45 1-1 1zm12 7.020c-.55 0-1-.45-1-1s.45-1 1-1 1 .45 1 1-.45 1-1 1z" />
          </svg>
        </button>
      </header>

      <main>
        <div class="peek"></div>
        <trip-map></trip-map>
        <section class="card">
          <div class="title">
            <h2>行程摘要</h2>
            <span class="distance">31.11 km</span>
          </div>
          <dl class="stats">
            <div class="stat"><dt>事件总数</dt><dd>0</dd></div>
            <div class="stat"><dt>平均车速</dt><dd>34.5 km/h</dd></div>
            <div class="stat"><dt>持续时间</dt><dd>54 分钟</dd></div>
          </dl>
          <div class="charts">
            <acceleration-chart name="纵向加速度" tone="green" .samples=${FORWARD}></acceleration-chart>
            <acceleration-chart name="横向加速度" tone="blue" .samples=${LATERAL}></acceleration-chart>
          </div>
        </section>
      </main>

      <footer>
        <svg width="28" height="44" viewBox="0 0 28 44" aria-hidden="true">
          <rect x="0" y="4" width="13" height="40" fill="#eeeef2" />
          <rect x="20" y="0" width="7" height="42" fill="#eeeef2" />
        </svg>
      </footer>
    `;
  }
}
